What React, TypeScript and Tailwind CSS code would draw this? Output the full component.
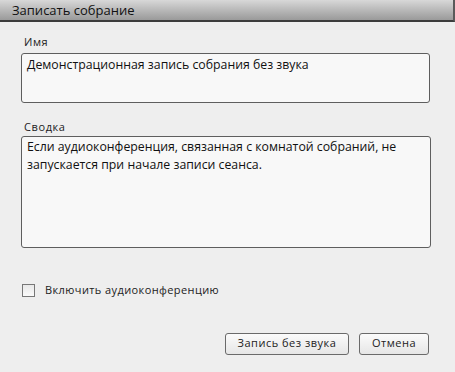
export default function App() {
  return (
    <div className="w-[455px] h-[372px] bg-[#eeeeee] flex flex-col font-['Open_Sans',sans-serif] text-[#111]">
      {/* Title bar */}
      <div className="h-[22px] flex items-center pl-[12px] bg-gradient-to-b from-[#d8d8d8] to-[#9a9a9a] border-b-2 border-[#3c3c3c] border-r-2 border-r-[#5a5a5a]">
        <span className="text-[13px] leading-none text-[#111]">Записать собрание</span>
      </div>

      <div className="flex flex-col px-[21px] pt-[13px]">
        <label className="text-[11px] tracking-[0.6px] text-[#222] pl-[3px] leading-[14px]">Имя</label>
        <div className="mt-[4px] h-[50px] w-[409px] rounded-[3px] border border-[#5e5e5e] bg-[#f8f8f8] px-[5px] pt-[2px] text-[12.3px] leading-[18px]">
          Демонстрационная запись собрания без звука
        </div>

        <label className="mt-[17px] text-[11px] tracking-[0.6px] text-[#222] pl-[3px] leading-[14px]">Сводка</label>
        <div className="mt-[2px] h-[112px] w-[410px] rounded-[3px] border border-[#5e5e5e] bg-[#f8f8f8] px-[5px] pt-[1px] text-[12.3px] leading-[18px]">
          Если аудиоконференция, связанная с комнатой собраний, не запускается при начале записи сеанса.
        </div>

        <div className="mt-[34px] flex items-center gap-[10px] pl-[1px]">
          <span className="w-[13px] h-[13px] border border-[#777] bg-gradient-to-b from-[#e8e8e8] to-[#fafafa]" />
          <span className="text-[11px] tracking-[0.4px] text-[#222]">Включить аудиоконференцию</span>
        </div>

        <div className="mt-[34px] flex justify-end gap-[10px] pr-[5px]">
          <button className="h-[22px] w-[124px] rounded-[3px] border border-[#6a6a6a] bg-gradient-to-b from-[#fbfbfb] to-[#e6e6e6] text-[11px] tracking-[0.5px] text-[#222]">
            Запись без звука
          </button>
          <button className="h-[22px] w-[70px] rounded-[3px] border border-[#6a6a6a] bg-gradient-to-b from-[#fbfbfb] to-[#e6e6e6] text-[11px] tracking-[0.5px] text-[#222]">
            Отмена
          </button>
        </div>
      </div>
    </div>
  );
}
